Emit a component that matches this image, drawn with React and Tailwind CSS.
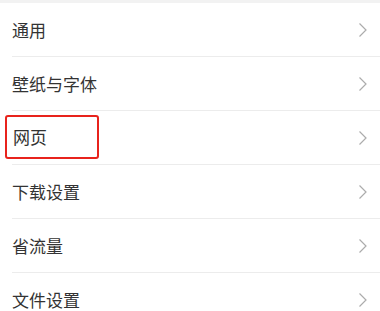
import React from 'react';

const items = ['通用', '壁纸与字体', '网页', '下载设置', '省流量', '文件设置'];

function Chevron() {
    return (
        <svg width="10" height="16" viewBox="0 0 10 16" className="shrink-0">
            <path d="M1.5 1.5 L8 8 L1.5 14.5" fill="none" stroke="#acacac" strokeWidth="1.2" />
        </svg>
    );
}

export default function App() {
    return (
        <div
            className="w-[380px] h-[311px] overflow-hidden bg-white"
            style={{ fontFamily: '"Noto Sans CJK SC", "Noto Sans", sans-serif' }}
        >
            <div className="h-[3px] bg-[#f2f2f2]" />
            {items.map((label) => (
                <div key={label} className="pl-3">
                    <div className="h-[54px] flex items-center justify-between pr-[12px] border-b border-[#ececec]">
                        {label === '网页' ? (
                            <div className="-ml-[7px] mb-[2px] w-[94px] h-[44px] flex items-center pl-[6px] border-2 border-[#e8231c] rounded-[3px]">
                                <span className="text-[17px] text-[#333333] leading-none">{label}</span>
                            </div>
                        ) : (
                            <span className="text-[17px] text-[#333333] leading-none">{label}</span>
                        )}
                        <Chevron />
                    </div>
                </div>
            ))}
        </div>
    );
}
